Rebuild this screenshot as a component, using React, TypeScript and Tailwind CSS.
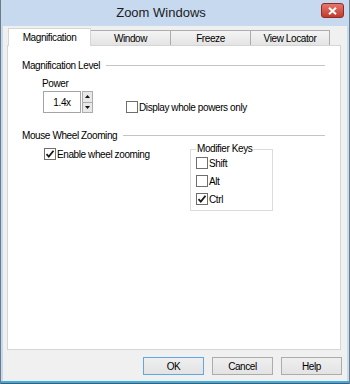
import React from 'react';

const font = { fontFamily: '"Liberation Sans", Arial, sans-serif' };

const Check = ({ checked }: { checked?: boolean }) => (
  <span className="w-[12px] h-[12px] border border-[#6e6e6e] bg-white flex items-center justify-center shrink-0">
    {checked && (
      <svg width="10" height="10" viewBox="0 0 10 10">
        <path d="M1.5 5.2 L3.8 7.6 L8.5 1.8" fill="none" stroke="#1a1a1a" strokeWidth="1.8" />
      </svg>
    )}
  </span>
);

const CheckRow = ({ label, checked }: { label: string; checked?: boolean }) => (
  <div className="flex items-center h-[12px] gap-[1px]">
    <Check checked={checked} />
    <span>{label}</span>
  </div>
);

const GroupHeader = ({ label }: { label: string }) => (
  <div className="flex items-center h-[12px] ml-[14px] mr-[15px]">
    <span>{label}</span>
    <div className="flex-1 h-px bg-[#c4c4c4] ml-[6px]" />
  </div>
);

const Btn = ({ label, primary }: { label: string; primary?: boolean }) => (
  <button
    className={
      'w-[61px] h-[18px] flex items-center justify-center bg-gradient-to-b from-[#efefef] to-[#e3e3e3] border ' +
      (primary ? 'border-[#5fa8e8]' : 'border-[#acacac]')
    }
  >
    {label}
  </button>
);

export default function App() {
  return (
    <div
      style={font}
      className="w-[350px] h-[384px] bg-[#c6d9ef] flex flex-col border-x border-[#6b7b8c] text-[10px] tracking-[-0.4px] text-black overflow-hidden"
    >
      {/* title bar */}
      <div className="h-[26px] shrink-0 flex items-center">
        <div className="flex-1 text-center text-[13px] tracking-normal text-[#1b1b1b]">Zoom Windows</div>
        <div className="w-[23px] h-[15px] mr-[5px] mb-[5px] rounded-[3px] border border-[#8f2c24] bg-gradient-to-b from-[#e4776d] to-[#c3392d] flex items-center justify-center">
          <svg width="9" height="8" viewBox="0 0 9 8">
            <path d="M1 0.8 L8 7.2 M8 0.8 L1 7.2" stroke="white" strokeWidth="2" />
          </svg>
        </div>
      </div>

      {/* client */}
      <div className="flex-1 mx-[2px] bg-[#f0f0f0] flex flex-col">
        {/* tabs */}
        <div className="flex items-end h-[19px] pl-[5px]">
          <div className="w-[83px] h-[18px] bg-white border-x border-t border-[#d5d5d5] flex items-center justify-center z-10 -mb-px">
            Magnification
          </div>
          <div className="w-[80px] h-[15px] bg-gradient-to-b from-[#f4f4f4] to-[#e4e4e4] border-t border-r border-[#acacac] flex items-center justify-center">
            Window
          </div>
          <div className="w-[80px] h-[15px] bg-gradient-to-b from-[#f4f4f4] to-[#e4e4e4] border-t border-r border-[#acacac] flex items-center justify-center">
            Freeze
          </div>
          <div className="w-[79px] h-[15px] bg-gradient-to-b from-[#f4f4f4] to-[#e4e4e4] border-t border-r border-[#acacac] flex items-center justify-center">
            View Locator
          </div>
        </div>

        {/* panel */}
        <div className="ml-[4px] w-[334px] h-[305px] bg-white border border-[#d5d5d5] flex flex-col">
          <div className="mt-[13px]">
            <GroupHeader label="Magnification Level" />
          </div>
          <div className="ml-[34px] mt-[6px] h-[12px] flex items-center">Power</div>
          <div className="flex items-center mt-[2px] ml-[35px]">
            <div className="w-[38px] h-[22px] border border-[#a4a4a4] bg-white flex items-center justify-center">1.4x</div>
            <div className="flex flex-col ml-[1px] w-[11px] h-[22px]">
              <div className="flex-1 border border-[#acacac] bg-[#e8e8e8] flex items-center justify-center">
                <svg width="5" height="3" viewBox="0 0 5 3"><path d="M0 3 L2.5 0 L5 3 Z" fill="#111" /></svg>
              </div>
              <div className="flex-1 border border-t-0 border-[#acacac] bg-[#e8e8e8] flex items-center justify-center">
                <svg width="5" height="3" viewBox="0 0 5 3"><path d="M0 0 L2.5 3 L5 0 Z" fill="#111" /></svg>
              </div>
            </div>
            <div className="ml-[33px] mt-[10px]">
              <CheckRow label="Display whole powers only" />
            </div>
          </div>

          <div className="mt-[16px]">
            <GroupHeader label="Mouse Wheel Zooming" />
          </div>

          <div className="flex items-start mt-[2px]">
            <div className="ml-[36px] mt-[5px] w-[146px]">
              <CheckRow label="Enable wheel zooming" checked />
            </div>
            <fieldset className="w-[83px] border border-[#dcdcdc] px-[5px] pb-[5px] flex flex-col">
              <legend className="px-[1px] h-[12px] leading-[12px]">Modifier Keys</legend>
              <div className="flex flex-col gap-[6px] mt-[2px]">
                <CheckRow label="Shift" />
                <CheckRow label="Alt" />
                <CheckRow label="Ctrl" checked />
              </div>
            </fieldset>
          </div>
        </div>

        {/* buttons */}
        <div className="flex justify-end gap-[8px] mt-[7px] pr-[5px]">
          <Btn label="OK" primary />
          <Btn label="Cancel" />
          <Btn label="Help" />
        </div>
      </div>
      <div className="h-[2px] bg-[#3aaee0] shrink-0" />
      <div className="h-px bg-[#4a5a6a] shrink-0" />
    </div>
  );
}
